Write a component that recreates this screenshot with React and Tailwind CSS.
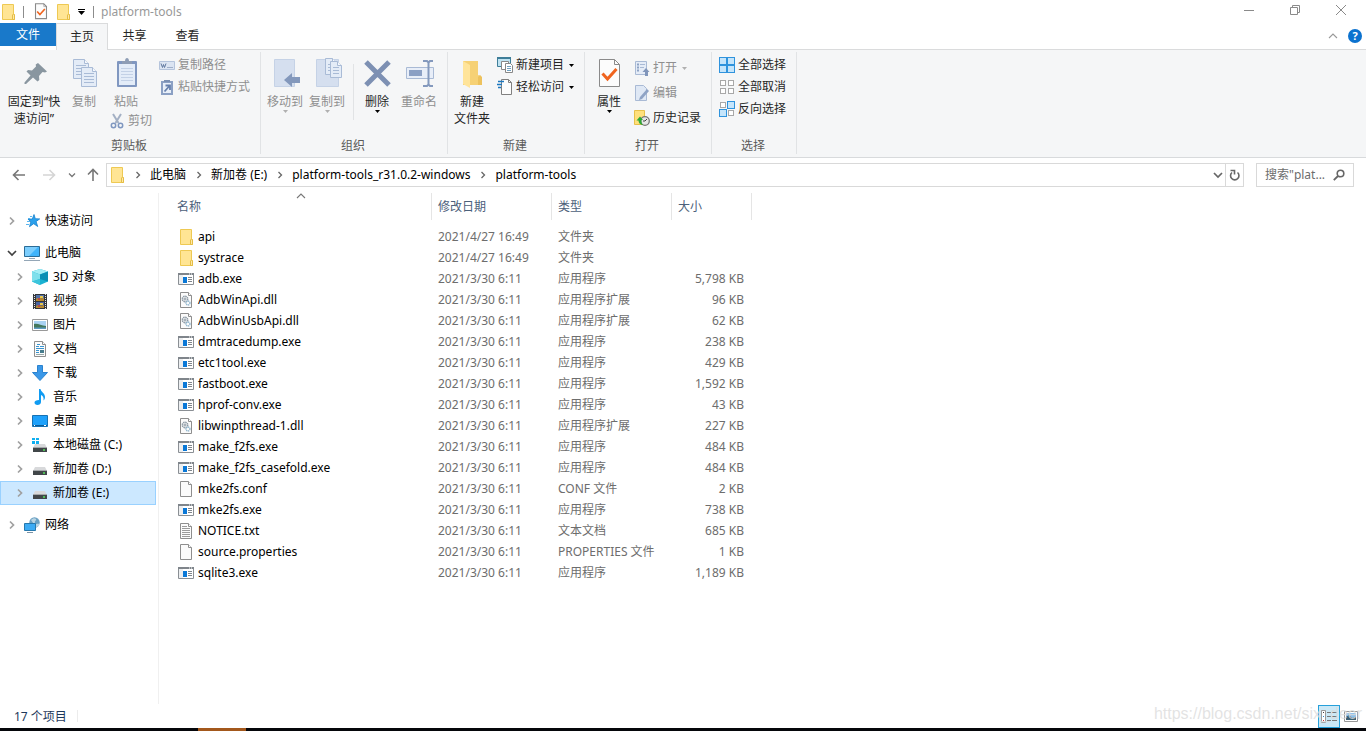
import clsx from 'clsx';

const files = [
  { name: 'api', date: '2021/4/27 16:49', kind: 'folder', type: '文件夹', size: '' },
  { name: 'systrace', date: '2021/4/27 16:49', kind: 'folder', type: '文件夹', size: '' },
  { name: 'adb.exe', date: '2021/3/30 6:11', kind: 'exe', type: '应用程序', size: '5,798 KB' },
  { name: 'AdbWinApi.dll', date: '2021/3/30 6:11', kind: 'dll', type: '应用程序扩展', size: '96 KB' },
  { name: 'AdbWinUsbApi.dll', date: '2021/3/30 6:11', kind: 'dll', type: '应用程序扩展', size: '62 KB' },
  { name: 'dmtracedump.exe', date: '2021/3/30 6:11', kind: 'exe', type: '应用程序', size: '238 KB' },
  { name: 'etc1tool.exe', date: '2021/3/30 6:11', kind: 'exe', type: '应用程序', size: '429 KB' },
  { name: 'fastboot.exe', date: '2021/3/30 6:11', kind: 'exe', type: '应用程序', size: '1,592 KB' },
  { name: 'hprof-conv.exe', date: '2021/3/30 6:11', kind: 'exe', type: '应用程序', size: '43 KB' },
  { name: 'libwinpthread-1.dll', date: '2021/3/30 6:11', kind: 'dll', type: '应用程序扩展', size: '227 KB' },
  { name: 'make_f2fs.exe', date: '2021/3/30 6:11', kind: 'exe', type: '应用程序', size: '484 KB' },
  { name: 'make_f2fs_casefold.exe', date: '2021/3/30 6:11', kind: 'exe', type: '应用程序', size: '484 KB' },
  { name: 'mke2fs.conf', date: '2021/3/30 6:11', kind: 'blank', type: 'CONF 文件', size: '2 KB' },
  { name: 'mke2fs.exe', date: '2021/3/30 6:11', kind: 'exe', type: '应用程序', size: '738 KB' },
  { name: 'NOTICE.txt', date: '2021/3/30 6:11', kind: 'text', type: '文本文档', size: '685 KB' },
  { name: 'source.properties', date: '2021/3/30 6:11', kind: 'blank', type: 'PROPERTIES 文件', size: '1 KB' },
  { name: 'sqlite3.exe', date: '2021/3/30 6:11', kind: 'exe', type: '应用程序', size: '1,189 KB' },
];

const drives = [
  { label: '3D 对象', icon: CubeIcon },
  { label: '视频', icon: VideoIcon },
  { label: '图片', icon: PictureIcon },
  { label: '文档', icon: DocumentIcon },
  { label: '下载', icon: DownloadIcon },
  { label: '音乐', icon: MusicIcon },
  { label: '桌面', icon: DesktopIcon },
  { label: '本地磁盘 (C:)', icon: SystemDriveIcon },
  { label: '新加卷 (D:)', icon: DriveIcon },
  { label: '新加卷 (E:)', icon: DriveIcon, selected: true },
];

const crumbs = ['此电脑', '新加卷 (E:)', 'platform-tools_r31.0.2-windows', 'platform-tools'];

/* ---------- icons ---------- */

function Svg({ w = 16, h = 16, children, className }) {
  return (
    <svg width={w} height={h} viewBox={`0 0 ${w} ${h}`} fill="none" aria-hidden="true" className={clsx('shrink-0', className)}>
      {children}
    </svg>
  );
}

function FolderIcon() {
  return (
    <Svg>
      <path d="M2.5.5h11v9.500l1 .5v5h-12z" fill="#ffe594" stroke="#eec953" />
      <path d="M12.500 15.500v-4.500l1-1 1 1v4.500z" fill="#ffe9a6" stroke="#e5bd45" />
    </Svg>
  );
}

function ExeIcon() {
  return (
    <Svg>
      <path d="M.5 2.500h15v11H.5z" fill="#fff" stroke="#8a8f94" />
      <path d="M0 2h16v2H0z" fill="#7f858b" />
      <path d="M11 3h1M13 3h1" stroke="#fff" />
      <path d="M1 4h4v9H1z" fill="#eceef0" />
      <path d="M5 6h4v6H5z" fill="#0a78d7" />
      <path d="M10 6.500h4M10 8.500h4M10 10.500h4" stroke="#7f858b" />
    </Svg>
  );
}

function PageIcon({ children }) {
  return (
    <Svg>
      <path d="M2.500.5h8l3 3v12h-11z" fill="#fbfbfb" stroke="#8e8e8e" />
      <path d="M10.500.5v3h3" stroke="#8e8e8e" fill="#fff" />
      {children}
    </Svg>
  );
}

function DllIcon() {
  return (
    <PageIcon>
      <circle cx="7" cy="7" r="2.700" stroke="#8d9aa5" strokeWidth="1.500" strokeDasharray="1.500 .6" />
      <circle cx="7" cy="7" r="1" stroke="#8d9aa5" />
      <circle cx="10" cy="11" r="2" stroke="#8db4cd" strokeWidth="1.300" strokeDasharray="1.200 .5" />
    </PageIcon>
  );
}

function TextIcon() {
  return (
    <PageIcon>
      <path d="M4 3.500h5M4 5.500h8M4 7.500h8M4 9.500h8M4 11.500h8M4 13.500h8" stroke="#9b9b9b" />
    </PageIcon>
  );
}

function FileIcon({ kind }) {
  if (kind === 'folder') return <FolderIcon />;
  if (kind === 'exe') return <ExeIcon />;
  if (kind === 'dll') return <DllIcon />;
  if (kind === 'text') return <TextIcon />;
  return <PageIcon />;
}

function StarIcon() {
  return (
    <Svg>
      <path d="M10 1.500l1.300 4.200 4.400.2-3.600 2.600 1.600 5-4-2.800-4.200 3 1.300-4.700L4 6h4.300z" fill="#2aa0ec" stroke="#1680cd" strokeWidth=".8" />
      <path d="M6 3.500h2M4 5.500h2M3 8.500h3M2 11.500h3" stroke="#58b5ee" />
    </Svg>
  );
}

function ComputerIcon() {
  return (
    <Svg>
      <path d="M.5 1.500h15v10H.5z" fill="#41b4fb" stroke="#2b6c97" />
      <path d="M1 2h13L5 11H1z" fill="#7dcefd" />
      <path d="M0 15.500h16M5 13.500h6" stroke="#94a6b6" />
    </Svg>
  );
}

function CubeIcon() {
  return (
    <Svg>
      <path d="M0 2.500l8-2.500 8 2.500v10L8 16l-8-3.500z" fill="#1bb2d2" />
      <path d="M8 0l8 2.500-8 3-8-3z" fill="#a4eef5" />
      <path d="M0 2.500l8 3V10l-8 2.500z" fill="#7fe0ec" />
      <path d="M0 12.500L8 10v6z" fill="#3cc5dc" />
      <path d="M8 5.500l8-3v10L8 10z" fill="#0b8fb4" />
    </Svg>
  );
}

function VideoIcon() {
  return (
    <Svg>
      <path d="M1 1h14v15H1z" fill="#33363b" />
      <path d="M2.500 1v15M13.500 1v15" stroke="#e6e6e6" strokeDasharray="1 1" />
      <path d="M4 2h8v6H4z" fill="#5472a8" />
      <path d="M4 9h8v6H4z" fill="#4a64a0" />
      <path d="M4 6c2-2 5 0 8-1v3H4zM4 13c2-2 5 1 8-1v3H4z" fill="#b6862e" />
      <path d="M8 3h3v2H8zM8 10h3v2H8z" fill="#e7c74b" />
      <path d="M6 5h2v2H6zM6 12h2v2H6z" fill="#b74a4a" />
    </Svg>
  );
}

function PictureIcon() {
  return (
    <Svg>
      <path d="M.5 2.500h15v11H.5z" fill="#fff" stroke="#999" />
      <path d="M2 4h12v8H2z" fill="#a9d2f2" />
      <path d="M2 7c4-1 7 2 12 2v2H2z" fill="#44785c" />
      <path d="M2 10.500h12V12H2z" fill="#5e9ac1" />
    </Svg>
  );
}

function DocumentIcon() {
  return (
    <PageIcon>
      <path d="M5 3.500h3M4 5.500h3M8 5.500h4M4 7.500h8M4 9.500h3M4 11.500h3" stroke="#3994cf" />
      <path d="M8 9h4v3H8z" fill="#477c8d" />
      <path d="M4 13.500h8" stroke="#9aa" />
    </PageIcon>
  );
}

function DownloadIcon() {
  return (
    <Svg>
      <path d="M5.500.5h5v7h5L8 15.500.5 7.500h5z" fill="#3a98e8" stroke="#2b83cf" />
    </Svg>
  );
}

function MusicIcon() {
  return (
    <Svg>
      <path d="M7 0h1.500c.4 3 4.500 4 4.500 8 0 1.500-.5 2.500-1.500 3.500.5-3-.5-4.500-2.500-5.500v7c0 1.800-1.600 3-3.500 3S2.500 15 2.500 13.500 4.200 11 7 11z" fill="#0f9bf2" />
    </Svg>
  );
}

function DesktopIcon() {
  return (
    <Svg>
      <path d="M.5 2.500h15v11H.5z" fill="#1ea1fb" stroke="#1672b4" />
      <path d="M1 12.500h14" stroke="#0b5b97" />
      <path d="M2 12.500h1M12 12.500h2" stroke="#fff" />
    </Svg>
  );
}

function DriveBody() {
  return (
    <>
      <path d="M3 6h10l2 4H1z" fill="#d8d9db" />
      <path d="M1 9h14v5H1z" fill="#414649" />
      <path d="M1 9.500h14" stroke="#a5a8aa" />
      <path d="M11 12h2" stroke="#54e35b" strokeWidth="1.500" />
    </>
  );
}

function DriveIcon() {
  return (
    <Svg>
      <DriveBody />
    </Svg>
  );
}

function SystemDriveIcon() {
  return (
    <Svg>
      <g transform="translate(0 1)"><DriveBody /></g>
      <path d="M0 1h3v2H0zM4 1h3v2H4zM0 4h3v3H0zM4 4h3v3H4z" fill="#10aff0" />
    </Svg>
  );
}

function NetworkIcon() {
  return (
    <Svg>
      <circle cx="10.500" cy="5.500" r="5.200" fill="#6aa1c4" />
      <path d="M7 3c2-2 4-2 5-1s-2 2-1 4 3 0 4 1-1 3-3 3z" fill="#b9d4e2" />
      <path d="M.5 6.500h11v7H.5z" fill="#3cabf4" stroke="#2678ad" />
      <path d="M3 15.500h6" stroke="#7b93a6" />
    </Svg>
  );
}

function Chevron({ dir = 'right', thin, className }) {
  const d = {
    right: 'M3 1.500L6.500 5 3 8.500',
    down: 'M1 3l4 4 4-4',
    up: 'M1 7l4-4 4 4',
  }[dir];
  return (
    <Svg w={10} h={10} className={className}>
      <path d={d} stroke="currentColor" strokeWidth={thin ? 1.1 : 1.7} />
    </Svg>
  );
}

function CrumbChevron() {
  return (
    <Svg w={6} h={8} className="mr-[9px] ml-2.5 text-[#666]">
      <path d="M1.500 1l3 3-3 3" stroke="currentColor" strokeWidth="1.300" />
    </Svg>
  );
}

function Caret({ className }) {
  return (
    <Svg w={5} h={3} className={className}>
      <path d="M0 0h5L2.500 3z" fill="currentColor" />
    </Svg>
  );
}

function PinIcon() {
  return (
    <Svg w={32} h={32}>
      <path d="M20 5l9 8.500-2 1-2.500-.5-3.500 4 .3 4-1.800 1.500-4.500-4L8 26H6.500v-1.500l6-7-4-4 1.500-1.500 4 .5 4-4-.3-2z" fill="#8996a0" />
    </Svg>
  );
}

function Sheet({ x, y, w = 15, h = 19 }) {
  const lines = [];
  for (let i = 6; i < h - 2; i += 3) lines.push(`M3 ${i}.5h${w - 6}`);
  return (
    <g transform={`translate(${x} ${y})`}>
      <path d={`M.5.5h${w - 5}l4 4v${h - 5}H.5z`} fill="#e4ecf7" stroke="#a9bbd6" />
      <path d={`M${w - 4.5}.5v4h4`} stroke="#a9bbd6" fill="#f5f8fc" />
      <path d={lines.join('')} stroke="#a9bbd6" />
    </g>
  );
}

function CopyIcon() {
  return (
    <Svg w={32} h={32}>
      <Sheet x={5} y={1} w={16} h={20} />
      <Sheet x={13} y={9} w={16} h={20} />
    </Svg>
  );
}

function PasteIcon() {
  return (
    <Svg w={32} h={32}>
      <rect x="7" y="3" width="20" height="26" rx="1" fill="#8097c0" />
      <path d="M9 6h16v21H9z" fill="#e3ecf8" />
      <path d="M12 6V3h3c0-4 4-4 4 0h3v3z" fill="#8e9db5" />
      <path d="M11 10.500h12M11 13.500h12M11 16.500h12M11 19.500h12M11 22.500h12" stroke="#c3d1e6" />
    </Svg>
  );
}

function MoveToIcon() {
  return (
    <Svg w={32} h={32}>
      <path d="M5.500 1.500h20v27h-20z" fill="#d5dfef" stroke="#c5d2e6" />
      <path d="M15 22l8-7v4h8v6h-8v4z" fill="#8398bc" />
    </Svg>
  );
}

function CopyToIcon() {
  return (
    <Svg w={32} h={32}>
      <path d="M5.500 1.500h22v27h-22z" fill="#d5dfef" stroke="#c5d2e6" />
      <Sheet x={14} y={0} w={12} h={17} />
      <Sheet x={19} y={3} w={12} h={17} />
    </Svg>
  );
}

function DeleteIcon() {
  return (
    <Svg w={32} h={32}>
      <path d="M5 4l23 23M28 4L5 27" stroke="#7d90b3" strokeWidth="5" />
    </Svg>
  );
}

function RenameIcon() {
  return (
    <Svg w={32} h={32}>
      <path d="M3.500 9.500h27v11h-27z" fill="#e8eef8" stroke="#a9bad5" />
      <path d="M6 12h13v6H6z" fill="#8ba0c4" />
      <path d="M20 3h4l1.500 1.500L27 3h3M25.500 4v23M20 28h4l1.500-1.500L27 28h3" stroke="#8499bd" strokeWidth="2" />
    </Svg>
  );
}

function NewFolderIcon() {
  return (
    <Svg w={32} h={32}>
      <path d="M7 3h15v14l3 1v9H7z" fill="#f6d175" />
      <path d="M7 3l7 4v23l-7-4z" fill="#ffe49a" />
      <path d="M22 27v-8l2-2 2 2v8z" fill="#edc25e" />
    </Svg>
  );
}

function PropertiesIcon({ small }) {
  return (
    <svg width={small ? 14 : 32} height={small ? 17 : 32} viewBox={small ? '5 0 23 31' : '0 0 32 32'} fill="none" aria-hidden="true">
      <path d="M6.500 1.500h15l5 5v22h-20z" fill="#fcfcfc" stroke="#8a8a8a" strokeWidth={small ? 2 : 1} />
      <path d="M21.500 1.500v5h5" stroke="#8a8a8a" />
      <path d="M9.500 15.500l5 5.500 9-10" stroke="#f0641e" strokeWidth="3" />
    </svg>
  );
}

function CopyPathIcon() {
  return (
    <Svg>
      <path d="M.5 4.500h15v8H.5z" fill="#dbe4f2" stroke="#b5c4dc" />
      <path d="M2 6.500l1.500 4 1-3 1 3 1.500-4M8.500 10.500h1M10.500 10.500h1M12.500 10.500h1" stroke="#6078a0" />
    </Svg>
  );
}

function PasteShortcutIcon() {
  return (
    <Svg>
      <path d="M2 2h12v14H2z" fill="#8ba0c4" />
      <path d="M4 4h8v10H4z" fill="#e8eff9" />
      <path d="M5 3V1h6v2z" fill="#7c90b2" />
      <path d="M5.500 12.500l4.500-5M6.500 6.500h4.500v4.500" stroke="#6680ad" strokeWidth="1.800" />
    </Svg>
  );
}

function CutIcon() {
  return (
    <Svg>
      <path d="M4 1l5.500 9M12 1L6.500 10" stroke="#a3b0c4" strokeWidth="2" />
      <circle cx="4.500" cy="12.500" r="2.200" stroke="#7f97c0" strokeWidth="1.500" />
      <circle cx="11.500" cy="12.500" r="2.200" stroke="#7f97c0" strokeWidth="1.500" />
    </Svg>
  );
}

function NewItemIcon() {
  return (
    <Svg>
      <path d="M.5.5h13v9H.5z" fill="#bfe3f2" stroke="#3e7e99" />
      <path d="M0 1h14" stroke="#3e7e99" strokeWidth="2" />
      <path d="M4.500 4.500h7v8h-7z" fill="#fff" stroke="#888" />
      <path d="M8.500 6.500h5l2 2v7h-7z" fill="#fff" stroke="#888" />
      <path d="M10 9.500h4M10 11.500h4M10 13.500h4" stroke="#70a0c0" />
    </Svg>
  );
}

function EasyAccessIcon() {
  return (
    <Svg>
      <path d="M4.500.5h7l3 3v12h-10z" fill="#fcfcfc" stroke="#808080" />
      <path d="M11.500.5v3h3" stroke="#808080" />
      <path d="M1 2.500h6M0 5.500h5M1 8.500h3" stroke="#1d78bf" strokeWidth="1.500" />
    </Svg>
  );
}

function OpenIcon() {
  return (
    <Svg>
      <path d="M1.500 1.500h11v13h-11z" fill="#e5ecf7" stroke="#a9bad5" />
      <path d="M3 4.500h2M3 7.500h2M3 10.500h2" stroke="#8ea3c5" strokeWidth="2" />
      <path d="M6 4.500h5M6 7.500h4" stroke="#a9bad5" />
      <path d="M11 16v-4H8.500L12 8l3.500 4H14v4z" fill="#8095ba" />
    </Svg>
  );
}

function EditIcon() {
  return (
    <Svg>
      <path d="M1.500.5h8l3 3v12h-11z" fill="#dfe8f5" stroke="#a9bad5" />
      <path d="M5 15l1-3 7-8 2 2-7 8z" fill="#8fa3c5" />
    </Svg>
  );
}

function HistoryIcon() {
  return (
    <Svg>
      <path d="M.5.500h10v14H.5z" fill="#ffe07c" stroke="#e7c04a" />
      <circle cx="11" cy="11" r="4.300" fill="#e6e6e6" stroke="#777" strokeWidth="1.300" />
      <path d="M11 11l2-2M11 11H9" stroke="#444" />
      <path d="M2.500 10.500L6 6.500l3 3.500H7.500c-.3 2 0 3.500 1.500 5-3.200-.5-4.500-2.200-4.500-4.500z" fill="#2ea836" />
    </Svg>
  );
}

const selectCells = [
  [0, 0],
  [8, 0],
  [0, 8],
  [8, 8],
];

function SelectIcon({ on }) {
  return (
    <Svg>
      {selectCells.map(([x, y], i) =>
        on[i] ? (
          <rect key={i} x={x + 0.5} y={y + 0.5} width="7" height="7" fill="#c5e5fb" stroke="#2f93dd" />
        ) : (
          <rect key={i} x={x + 1.5} y={y + 1.5} width="5" height="5" fill="#fff" stroke="#a8a8a8" />
        ),
      )}
    </Svg>
  );
}

/* ---------- ribbon ---------- */

function BigButton({ icon, lines, width, disabled, caret }) {
  return (
    <button type="button" disabled={disabled} className={clsx('flex flex-col items-center pt-1.5', width, disabled ? 'text-[#8f8f8f]' : 'text-[#262626]')}>
      {icon}
      <span className="mt-[3px] leading-[17px] whitespace-nowrap">
        {lines.map(line => (
          <span key={line} className="block">{line}</span>
        ))}
      </span>
      {caret && <Caret className={disabled ? 'text-[#b0b0b0]' : 'text-black'} />}
    </button>
  );
}

function SmallButton({ icon, label, disabled, caret }) {
  return (
    <button type="button" disabled={disabled} className={clsx('flex h-[22px] items-center gap-[3px] whitespace-nowrap', disabled ? 'text-[#8f8f8f]' : 'text-[#262626]')}>
      {icon}
      <span>{label}</span>
      {caret && <Caret className={clsx('ml-0.5', disabled ? 'text-[#b0b0b0]' : 'text-black')} />}
    </button>
  );
}

function Group({ title, width, children }) {
  return (
    <section className={clsx('flex shrink-0 flex-col border-r border-[#e1e3e5]', width)}>
      <div className="flex flex-1 items-start">{children}</div>
      <h2 className="pr-0.5 text-center leading-[17px] text-[#5a5a5a]">{title}</h2>
    </section>
  );
}

function Ribbon() {
  return (
    <div className="flex h-[108px] border-b border-[#d8dadc] bg-[#f5f6f7] pt-0.5 pb-[3px]">
      <Group title="剪贴板" width="w-[261px]">
        <BigButton width="ml-1 w-[60px]" icon={<PinIcon />} lines={['固定到“快', '速访问”']} />
        <BigButton width="w-10" icon={<CopyIcon />} lines={['复制']} disabled />
        <div className="ml-0.5">
          <div className="flex">
            <BigButton width="w-10" icon={<PasteIcon />} lines={['粘贴']} disabled />
            <div className="ml-[13px] pt-0.5">
              <SmallButton icon={<CopyPathIcon />} label="复制路径" disabled />
              <SmallButton icon={<PasteShortcutIcon />} label="粘贴快捷方式" disabled />
            </div>
          </div>
          <div className="pl-[3px]">
            <SmallButton icon={<CutIcon />} label="剪切" disabled />
          </div>
        </div>
      </Group>
      <Group title="组织" width="w-[187px]">
        <BigButton width="ml-[3px] w-[42px]" icon={<MoveToIcon />} lines={['移动到']} disabled caret />
        <BigButton width="w-[42px]" icon={<CopyToIcon />} lines={['复制到']} disabled caret />
        <div className="mr-1 ml-[5px] mt-3 h-14 w-px bg-[#e1e3e5]" />
        <BigButton width="w-[38px]" icon={<DeleteIcon />} lines={['删除']} caret />
        <BigButton width="w-[46px]" icon={<RenameIcon />} lines={['重命名']} disabled />
      </Group>
      <Group title="新建" width="w-[137px]">
        <BigButton width="ml-0.5 w-11" icon={<NewFolderIcon />} lines={['新建', '文件夹']} />
        <div className="ml-[3px] pt-0.5">
          <SmallButton icon={<NewItemIcon />} label="新建项目" caret />
          <SmallButton icon={<EasyAccessIcon />} label="轻松访问" caret />
        </div>
      </Group>
      <Group title="打开" width="w-[127px]">
        <BigButton width="ml-1 w-10" icon={<PropertiesIcon />} lines={['属性']} caret />
        <div className="ml-[5px] flex flex-col gap-[3px] pt-[5px]">
          <SmallButton icon={<OpenIcon />} label="打开" disabled caret />
          <SmallButton icon={<EditIcon />} label="编辑" disabled />
          <SmallButton icon={<HistoryIcon />} label="历史记录" />
        </div>
      </Group>
      <Group title="选择" width="w-[85px]">
        <div className="pt-0.5 pl-[7px]">
          <SmallButton icon={<SelectIcon on={[true, true, true, true]} />} label="全部选择" />
          <SmallButton icon={<SelectIcon on={[false, false, false, false]} />} label="全部取消" />
          <SmallButton icon={<SelectIcon on={[false, true, true, false]} />} label="反向选择" />
        </div>
      </Group>
    </div>
  );
}

/* ---------- window parts ---------- */

function TitleBar() {
  return (
    <header className="flex h-[23px] items-center">
      <FolderIcon />
      <div className="ml-[7px] h-3 w-px bg-[#8c8c8c]" />
      <button type="button" aria-label="属性" className="ml-2.5">
        <PropertiesIcon small />
      </button>
      <button type="button" aria-label="新建文件夹" className="ml-[7px]">
        <FolderIcon />
      </button>
      <button type="button" aria-label="自定义快速访问工具栏" className="ml-[7px]">
        <Svg w={7} h={6}>
          <path d="M0 .5h7" stroke="#000" />
          <path d="M0 2h7L3.500 6z" fill="#000" />
        </Svg>
      </button>
      <div className="ml-2 h-3 w-px bg-[#8c8c8c]" />
      <h1 className="ml-[7px] text-[#999]">platform-tools</h1>
      <div className="ml-auto flex pr-0.5 pb-1 text-[#8a8a8a]">
        <button type="button" aria-label="最小化" className="flex w-[46px] justify-center">
          <Svg w={10} h={10}><path d="M0 5.500h10" stroke="currentColor" /></Svg>
        </button>
        <button type="button" aria-label="还原" className="flex w-[46px] justify-center">
          <Svg w={10} h={10}><path d="M.5 2.500h7v7h-7zM2.500 2.500v-2h7v7h-2" stroke="currentColor" /></Svg>
        </button>
        <button type="button" aria-label="关闭" className="flex w-[46px] justify-center">
          <Svg w={10} h={10}><path d="M0 0l10 10M10 0L0 10" stroke="currentColor" /></Svg>
        </button>
      </div>
    </header>
  );
}

function Tabs() {
  return (
    <nav className="flex h-[27px] items-stretch">
      <button type="button" className="mb-1 w-14 bg-[#1979ca] text-white">文件</button>
      <button type="button" className="w-[52px] border-x border-t border-[#dadbdc] bg-[#f5f6f7] text-[#262626]">主页</button>
      <div className="flex flex-1 items-stretch border-b border-[#dadbdc] text-[#262626]">
        <button type="button" className="w-[53px]">共享</button>
        <button type="button" className="w-[53px]">查看</button>
        <div className="ml-auto flex items-center gap-2.5 pr-1">
          <button type="button" aria-label="最小化功能区" className="text-[#999]">
            <Chevron dir="up" thin />
          </button>
          <button type="button" aria-label="帮助" className="flex size-3.5 items-center justify-center rounded-full bg-[#0b72cf] text-[11px] font-bold text-white">?</button>
        </div>
      </div>
    </nav>
  );
}

function NavArrow({ d, className }) {
  return (
    <Svg w={14} h={14} className={className}>
      <path d={d} stroke="currentColor" strokeWidth="1.600" />
    </Svg>
  );
}

function AddressBar() {
  return (
    <div className="flex items-center pt-[5px] pr-3">
      <div className="flex w-[106px] items-center pl-3 text-[#777]">
        <button type="button" aria-label="后退"><NavArrow d="M13 7H1.500M6.500 2l-5 5 5 5" /></button>
        <button type="button" aria-label="前进" className="ml-4 text-[#d5d5d5]"><NavArrow d="M1 7h11.500M7.500 2l5 5-5 5" /></button>
        <button type="button" aria-label="最近浏览的位置" className="ml-3">
          <Svg w={8} h={8}><path d="M1 2.500l3 3 3-3" stroke="currentColor" strokeWidth="1.300" /></Svg>
        </button>
        <button type="button" aria-label="上移" className="ml-2.5"><NavArrow d="M7 13V1.500M2 6.500l5-5 5 5" /></button>
      </div>
      <div className="flex h-6 flex-1 items-center border border-[#d9d9d9] pl-0.5">
        <FolderIcon />
        {crumbs.map(c => (
          <span key={c} className="flex items-center">
            <CrumbChevron />
            <a href="#" className="whitespace-nowrap text-black">{c}</a>
          </span>
        ))}
        <button type="button" aria-label="以前的位置" className="mr-0.5 ml-auto text-[#666]">
          <Chevron dir="down" />
        </button>
        <button type="button" aria-label="刷新" className="flex h-full w-[18px] items-center justify-center border-l border-[#d9d9d9] text-[#666]">
          <Svg w={11} h={12}>
            <path d="M3 3.500A4.200 4.200 0 1 0 8.500 3.500M1.500 1.500h4v4" stroke="currentColor" strokeWidth="1.600" />
          </Svg>
        </button>
      </div>
      <label className="ml-3 flex h-6 w-[98px] items-center border border-[#d9d9d9] pr-2 pl-2">
        <input type="text" aria-label="搜索" placeholder={'搜索"plat...'} className="w-full min-w-0 outline-none placeholder:text-[#6d6d6d]" />
        <Svg w={12} h={12} className="text-[#666]">
          <circle cx="7.500" cy="4.500" r="3.300" stroke="currentColor" strokeWidth="1.600" />
          <path d="M5 7L.8 11.200" stroke="currentColor" strokeWidth="1.800" />
        </Svg>
      </label>
    </div>
  );
}

function TreeItem({ icon: Icon, label, nested, open, selected }) {
  return (
    <li>
      <a
        href="#"
        className={clsx(
          'flex h-6 w-[156px] items-center gap-[5px] border text-black',
          nested ? 'pl-3.5' : 'pl-1.5',
          selected ? 'border-[#99d1ff] bg-[#cce8ff]' : 'border-transparent',
        )}
      >
        <Chevron dir={open ? 'down' : 'right'} className={clsx('mr-0.5', open ? 'text-[#404040]' : 'text-[#a0a0a0]')} />
        <Icon />
        <span className="whitespace-nowrap">{label}</span>
      </a>
    </li>
  );
}

function Sidebar() {
  return (
    <aside className="w-[159px] shrink-0 border-r border-[#f0f0f0] pt-4">
      <ul>
        <TreeItem icon={StarIcon} label="快速访问" />
      </ul>
      <ul className="my-2">
        <TreeItem icon={ComputerIcon} label="此电脑" open />
        {drives.map(d => (
          <TreeItem key={d.label} icon={d.icon} label={d.label} selected={d.selected} nested />
        ))}
      </ul>
      <ul>
        <TreeItem icon={NetworkIcon} label="网络" />
      </ul>
    </aside>
  );
}

function FileList() {
  return (
    <div className="flex-1">
      <table className="w-[593px] table-fixed border-separate border-spacing-0">
        <colgroup>
          <col className="w-[273px]" />
          <col className="w-[120px]" />
          <col className="w-[120px]" />
          <col className="w-20" />
        </colgroup>
        <thead>
          <tr className="h-[27px] text-left text-[#4c607a]">
            <th className="relative border-r border-[#e5e5e5] p-0 pl-[18px] font-normal">
              名称
              <Chevron dir="up" thin className="absolute -top-0.5 left-[137px] text-[#777]" />
            </th>
            <th className="border-r border-[#e5e5e5] p-0 pl-1.5 font-normal">修改日期</th>
            <th className="border-r border-[#e5e5e5] p-0 pl-1.5 font-normal">类型</th>
            <th className="border-r border-[#e5e5e5] p-0 pl-1.5 font-normal">大小</th>
          </tr>
        </thead>
        <tbody className="text-[#6d6d6d] before:block before:h-1.5 before:content-['']">
          {files.map(f => (
            <tr key={f.name} className="h-[21px]">
              <td className="p-0 pl-[19px] text-black">
                <div className="flex items-center gap-1">
                  <FileIcon kind={f.kind} />
                  <span>{f.name}</span>
                </div>
              </td>
              <td className="p-0 pl-1.5">{f.date}</td>
              <td className="p-0 pl-1.5 whitespace-nowrap">{f.type}</td>
              <td className="p-0 pr-2 text-right">{f.size}</td>
            </tr>
          ))}
        </tbody>
      </table>
    </div>
  );
}

function StatusBar() {
  return (
    <footer className="relative flex h-6 items-center">
      <span className="pt-0.5 pl-3.5 text-[#1e395b]">17 个项目</span>
      <div className="ml-2.5 h-3 w-px bg-[#ececec]" />
      <div className="ml-auto flex h-full items-center gap-1 pr-2">
        <button type="button" aria-label="详细信息" className="flex h-[23px] w-[22px] items-center justify-center border border-[#26a0da] bg-[#cbe8f6]">
          <Svg w={16} h={13}>
            <path d="M.5.5h4v12h-4z" fill="#fff" stroke="#999" />
            <path d="M2 2.500h1" stroke="#444" />
            <path d="M2 6.500h1" stroke="#2d89d0" />
            <path d="M2 10.500h1" stroke="#c33" />
            <path d="M6 2.500h4M11 2.500h5M6 6.500h4M11 6.500h5M6 10.500h4M11 10.500h5" stroke="#777" />
          </Svg>
        </button>
        <button type="button" aria-label="大图标">
          <Svg w={14} h={11}>
            <path d="M.5.5h13v10H.5z" fill="#fff" stroke="#999" />
            <path d="M2 2h10v7H2z" fill="#8fc0ea" />
            <path d="M2 6l3-2 3 3 4-1v3H2z" fill="#3c5f72" />
          </Svg>
        </button>
      </div>
      <span className="absolute right-1 bottom-0.5 font-['Liberation_Sans',sans-serif] text-base text-[#dcdcdc]/80">https://blog.csdn.net/six_deer</span>
    </footer>
  );
}

export default function App() {
  return (
    <div className="flex min-h-screen flex-col bg-white font-['Noto_Sans','Noto_Sans_CJK_SC',sans-serif] text-xs">
      <TitleBar />
      <Tabs />
      <Ribbon />
      <AddressBar />
      <main className="flex flex-1 pt-1.5">
        <Sidebar />
        <FileList />
      </main>
      <StatusBar />
      <div className="h-[3px] bg-[#05060a] pl-[198px]">
        <div className="h-full w-12 bg-[#a3581c]" />
      </div>
    </div>
  );
}
